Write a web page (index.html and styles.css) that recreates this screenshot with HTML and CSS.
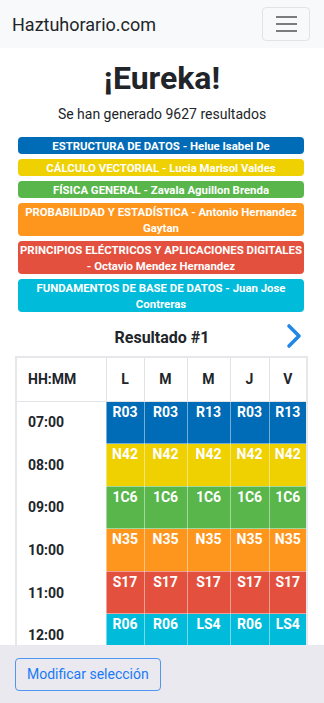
FILE: index.html
```html
<!DOCTYPE html>
<html lang="es">
<head>
<meta charset="utf-8">
<title>Haztuhorario.com</title>
<link rel="stylesheet" href="styles.css">
</head>
<body>
<nav class="navbar">
  <span class="brand">Haztuhorario.com</span>
  <button class="toggler" aria-label="Menú"><span></span><span></span><span></span></button>
</nav>
<main class="main">
  <h1 class="title">¡Eureka!</h1>
  <p class="subtitle">Se han generado 9627 resultados</p>
  <ul class="badges">
    <li class="badge blue">ESTRUCTURA DE DATOS - Helue Isabel De</li>
    <li class="badge yellow">CÁLCULO VECTORIAL - Lucia Marisol Valdes</li>
    <li class="badge green">FÍSICA GENERAL - Zavala Aguillon Brenda</li>
    <li class="badge orange">PROBABILIDAD Y ESTADÍSTICA - Antonio Hernandez Gaytan</li>
    <li class="badge red">PRINCIPIOS ELÉCTRICOS Y APLICACIONES DIGITALES - Octavio Mendez Hernandez</li>
    <li class="badge cyan">FUNDAMENTOS DE BASE DE DATOS - Juan Jose Contreras</li>
  </ul>
  <div class="result-head">
    <h2 class="result-title">Resultado #1</h2>
    <svg class="next" width="18" height="26" viewBox="0 0 18 26"><path d="M4 3 L14 13 L4 23" fill="none" stroke="#2188e8" stroke-width="3.6" stroke-linecap="round" stroke-linejoin="round"/></svg>
  </div>
  <table class="schedule">
    <colgroup>
      <col class="c-time"><col class="c-l"><col class="c-m"><col class="c-m"><col class="c-j"><col class="c-v">
    </colgroup>
    <thead>
      <tr><th class="time">HH:MM</th><th>L</th><th>M</th><th>M</th><th>J</th><th>V</th></tr>
    </thead>
    <tbody>
      <tr><td class="time">07:00</td><td class="blue">R03</td><td class="blue">R03</td><td class="blue">R13</td><td class="blue">R03</td><td class="blue">R13</td></tr>
      <tr><td class="time">08:00</td><td class="yellow">N42</td><td class="yellow">N42</td><td class="yellow">N42</td><td class="yellow">N42</td><td class="yellow">N42</td></tr>
      <tr><td class="time">09:00</td><td class="green">1C6</td><td class="green">1C6</td><td class="green">1C6</td><td class="green">1C6</td><td class="green">1C6</td></tr>
      <tr><td class="time">10:00</td><td class="orange">N35</td><td class="orange">N35</td><td class="orange">N35</td><td class="orange">N35</td><td class="orange">N35</td></tr>
      <tr><td class="time">11:00</td><td class="red">S17</td><td class="red">S17</td><td class="red">S17</td><td class="red">S17</td><td class="red">S17</td></tr>
      <tr><td class="time">12:00</td><td class="cyan">R06</td><td class="cyan">R06</td><td class="cyan">LS4</td><td class="cyan">R06</td><td class="cyan">LS4</td></tr>
      <tr><td class="time">13:00</td><td></td><td></td><td></td><td></td><td></td></tr>
    </tbody>
  </table>
</main>
<footer class="footer">
  <button class="btn-outline">Modificar selección</button>
</footer>
</body>
</html>
```

FILE: styles.css
```css
* { box-sizing: border-box; }
html, body { margin: 0; padding: 0; }
body {
  font-family: Roboto, "Liberation Sans", sans-serif;
  color: #212529;
  background: #fff;
  padding-bottom: 70px;
}
.navbar {
  height: 48px;
  background: #f8f9fa;
  display: flex;
  align-items: center;
  justify-content: space-between;
  padding: 0 14px 0 12px;
}
.brand {
  font-size: 18px;
  color: #212529;
}
.toggler {
  width: 48px;
  height: 34px;
  border: 1px solid #e2e3e5;
  border-radius: 4px;
  background: #f8f9fa;
  display: flex;
  flex-direction: column;
  align-items: center;
  justify-content: center;
  gap: 5px;
  padding: 0;
}
.toggler span {
  display: block;
  width: 21px;
  height: 2px;
  background: #7b7c7e;
}
.main {
  padding: 0 15px;
}
.title {
  margin: 11px 0 0;
  text-align: center;
  font-size: 32px;
  font-weight: 700;
  line-height: 38px;
}
.subtitle {
  margin: 7px 0 0;
  text-align: center;
  font-size: 14px;
  line-height: 20px;
}
.badges {
  list-style: none;
  margin: 13px 5px 0 3px;
  padding: 0;
  display: flex;
  flex-direction: column;
  gap: 5px;
}
.badge {
  border-radius: 4px;
  color: #fff;
  font-size: 11.4px;
  font-weight: 700;
  line-height: 16px;
  padding: 1px 0 0;
  text-align: center;
}
.blue { background: #006cb7; }
.yellow { background: #efd000; }
.green { background: #58b64b; }
.orange { background: #fe961e; }
.red { background: #e4503e; }
.cyan { background: #00bcda; }
.result-head {
  position: relative;
  display: flex;
  justify-content: center;
  align-items: center;
  height: 38px;
  margin-top: 6px;
}
.result-title {
  margin: 0;
  font-size: 16px;
  font-weight: 700;
}
.next {
  position: absolute;
  right: 6px;
  top: 5px;
}
.schedule {
  width: 291px;
  border-collapse: collapse;
  table-layout: fixed;
  border: 2px solid #e6e7ea;
}
.c-time { width: 90px; }
.c-l { width: 38px; }
.c-m { width: 43px; }
.c-j { width: 39px; }
.c-v { width: 38px; }
.schedule th, .schedule td {
  border: 1px solid #e2e3e6;
  font-size: 14px;
  font-weight: 700;
  padding: 0;
}
.schedule th {
  height: 44px;
  text-align: center;
  vertical-align: middle;
}
.schedule td {
  height: 42.6px;
  text-align: center;
  vertical-align: top;
  color: #fff;
  padding-top: 2px;
  line-height: 16px;
}
.schedule td[class] { border-color: rgba(255,255,255,0.45); }
.schedule .time {
  text-align: left;
  vertical-align: middle;
  padding-left: 11px;
  padding-top: 0;
  color: #212529;
  border-color: #e2e3e6;
}
.footer {
  position: fixed;
  left: 0;
  right: 0;
  bottom: 0;
  height: 58px;
  background: #e9e9ef;
  display: flex;
  align-items: center;
  padding: 0 15px;
}
.btn-outline {
  font-family: Roboto, "Liberation Sans", sans-serif;
  font-size: 14px;
  color: #1a7af6;
  background: transparent;
  border: 1px solid #4f95f2;
  border-radius: 4px;
  height: 33px;
  padding: 0 11px;
}
```
